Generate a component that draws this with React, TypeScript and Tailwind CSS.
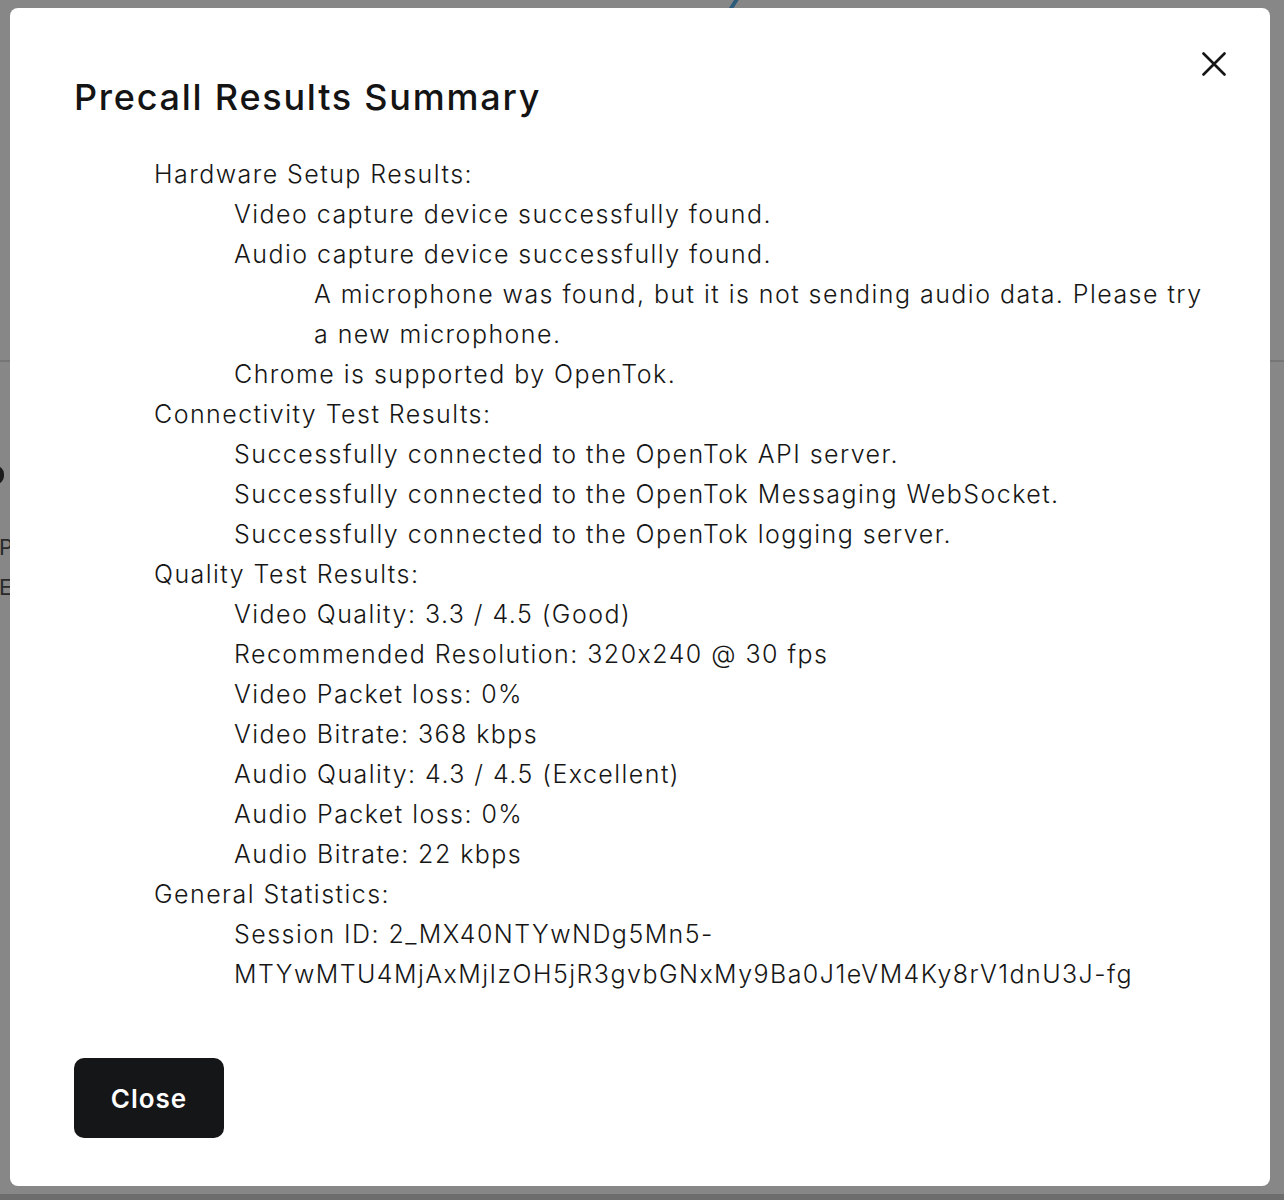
import React from "react";

const Line = ({ level, children }: { level: 0 | 1 | 2; children: React.ReactNode }) => {
  const pad = level === 0 ? "pl-0" : level === 1 ? "pl-[80px]" : "pl-[160px]";
  return <div className={pad}>{children}</div>;
};

export default function App() {
  return (
    <div
      className="relative h-[1200px] w-[1284px] overflow-hidden bg-[#878787] [font-feature-settings:'calt'_0]"
      style={{ fontFamily: 'Inter, "Noto Sans", sans-serif' }}
    >
      {/* hints of the page behind the overlay */}
      <div className="absolute left-0 top-[360px] h-[2px] w-full bg-[#767676]" />
      <div className="absolute left-[-12px] top-[466px] h-[18px] w-[16px] rounded-full border-[4px] border-[#1c1c1c]" />
      <div className="absolute left-[-1px] top-[532px] text-[22px] leading-[30px] text-[#2a2a2a]">P</div>
      <div className="absolute left-[-1px] top-[572px] text-[22px] leading-[30px] text-[#2a2a2a]">E</div>
      <svg className="absolute left-[724px] top-0" width="18" height="10" viewBox="0 0 18 10">
        <line x1="13" y1="-1" x2="6" y2="10" stroke="#2d5c7b" strokeWidth="4" />
      </svg>
      <div className="absolute bottom-0 left-0 h-[6px] w-full bg-[#6d6d6d]" />

      {/* modal */}
      <div className="relative ml-[10px] mt-[8px] flex h-[1178px] w-[1260px] flex-col items-start rounded-[8px] bg-white px-[64px] pt-[67px] text-[#161616]">
        <button className="absolute right-[44px] top-[44px] h-[24px] w-[24px]" aria-label="Close">
          <svg width="24" height="24" viewBox="0 0 24 24" fill="none">
            <path d="M1.5 1.5L22.5 22.5M22.5 1.5L1.5 22.5" stroke="#161616" strokeWidth="2.6" strokeLinecap="round" />
          </svg>
        </button>

        <h2 className="text-[36px] font-medium leading-[44px] tracking-[1.75px] text-[#141414]">
          Precall Results Summary
        </h2>

        <div className="mt-[35px] w-full pl-[80px] text-[25px] font-light leading-[40px] tracking-[1.45px] text-[#161616]">
          <Line level={0}>Hardware Setup Results:</Line>
          <Line level={1}>Video capture device successfully found.</Line>
          <Line level={1}>Audio capture device successfully found.</Line>
          <Line level={2}>
            A microphone was found, but it is not sending audio data. Please try a new microphone.
          </Line>
          <Line level={1}>Chrome is supported by OpenTok.</Line>
          <Line level={0}>Connectivity Test Results:</Line>
          <Line level={1}>Successfully connected to the OpenTok API server.</Line>
          <Line level={1}>Successfully connected to the OpenTok Messaging WebSocket.</Line>
          <Line level={1}>Successfully connected to the OpenTok logging server.</Line>
          <Line level={0}>Quality Test Results:</Line>
          <Line level={1}>Video Quality: 3.3 / 4.5 (Good)</Line>
          <Line level={1}>Recommended Resolution: 320x240 @ 30 fps</Line>
          <Line level={1}>Video Packet loss: 0%</Line>
          <Line level={1}>Video Bitrate: 368 kbps</Line>
          <Line level={1}>Audio Quality: 4.3 / 4.5 (Excellent)</Line>
          <Line level={1}>Audio Packet loss: 0%</Line>
          <Line level={1}>Audio Bitrate: 22 kbps</Line>
          <Line level={0}>General Statistics:</Line>
          <Line level={1}>
            Session ID: 2_MX40NTYwNDg5Mn5-MTYwMTU4MjAxMjIzOH5jR3gvbGNxMy9Ba0J1eVM4Ky8rV1dnU3J-fg
          </Line>
        </div>

        <button className="mt-[64px] flex h-[80px] w-[150px] items-center justify-center rounded-[10px] bg-[#151618] text-[26px] font-semibold tracking-[1px] text-white">
          Close
        </button>
      </div>
    </div>
  );
}
